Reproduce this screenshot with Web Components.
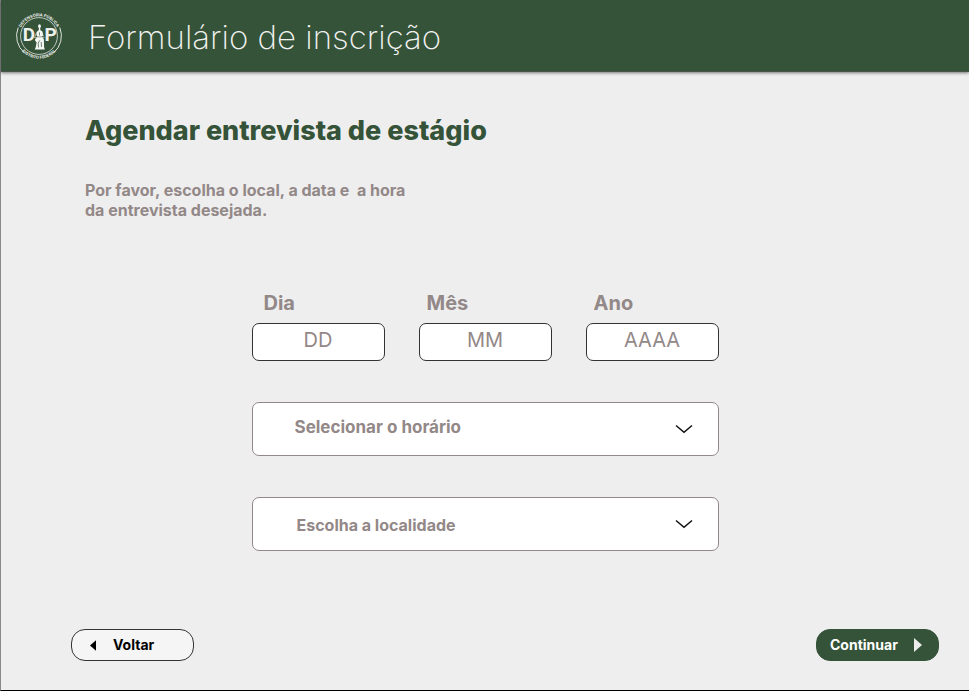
<!DOCTYPE html>
<html lang="pt-BR">
<head>
<meta charset="utf-8">
<meta name="viewport" content="width=device-width, initial-scale=1">
<title>Formulário de inscrição</title>
<style>
  :root {
    --green: #355338;
    --page: #eeeeee;
    --muted: #938888;
    --ink: #333333;
  }
  body { margin: 0; background: var(--page); font-family: Inter, "Liberation Sans", sans-serif; }
</style>
</head>
<body>
<interview-page>
  <app-header slot="header">Formulário de inscrição</app-header>
  <page-intro>
    <span slot="title">Agendar entrevista de estágio</span>
    <span>Por favor, escolha o local, a data e &nbsp;a hora<br>da entrevista desejada.</span>
  </page-intro>
  <schedule-form></schedule-form>
  <nav-button slot="actions" kind="back">Voltar</nav-button>
  <nav-button slot="actions" kind="next">Continuar</nav-button>
</interview-page>

<script>
  const define = (name, html, setup) => {
    const template = document.createElement('template');
    template.innerHTML = html;
    customElements.define(name, class extends HTMLElement {
      constructor() {
        super();
        this.attachShadow({ mode: 'open' }).append(template.content.cloneNode(true));
      }
      connectedCallback() { if (setup) setup(this, this.shadowRoot); }
    });
  };

  define('interview-page', `
    <style>
      :host { display: flex; flex-direction: column; min-height: 100vh; box-sizing: border-box;
        border-left: 1px solid #8a8a8a; border-bottom: 1px solid #000; background: var(--page); }
      main { flex: 1; padding: 41px 84px 0; }
      footer { display: flex; justify-content: space-between; padding: 0 30px 29px 70px; }
    </style>
    <slot name="header"></slot>
    <main><slot></slot></main>
    <footer><slot name="actions"></slot></footer>`);

  define('seal-logo', `
    <style>
      :host { display: block; flex: none; width: 48px; height: 48px; }
      svg { display: block; width: 100%; height: 100%; overflow: visible; }
    </style>
    <svg viewBox="0 0 48 48" fill="none" role="img" aria-label="Defensoria Pública">
      <defs>
        <path id="top" d="M4.6 28A19.8 19.8 0 1 1 43.4 28"/>
        <path id="bottom" d="M7 39A22.6 22.6 0 0 0 41 39"/>
      </defs>
      <path d="M3.2 15.5A22.4 22.4 0 0 0 9.5 41M44.8 15.5A22.4 22.4 0 0 1 38.5 41" stroke="#dfe5df" stroke-width="1"/>
      <circle cx="24" cy="24" r="18.4" stroke="#dfe5df" stroke-width=".8"/>
      <g fill="#eef1ee" font-family="Inter, sans-serif" font-weight="700" text-anchor="middle">
        <text font-size="4"><textPath href="#top" startOffset="50%">DEFENSORIA PÚBLICA</textPath></text>
        <text font-size="4"><textPath href="#bottom" startOffset="50%">DISTRITO FEDERAL</textPath></text>
        <g font-family="'Liberation Sans Narrow', Roboto, sans-serif" font-size="19">
          <text x="14" y="29">D</text>
          <text x="35.5" y="29">P</text>
        </g>
      </g>
      <g fill="#f4f6f4">
        <ellipse cx="24.5" cy="14.2" rx="1.4" ry="1.9"/>
        <path d="M24 15.5h1.1l.3 2.7 1.8 1.1.9 4-1 1.2 1.8 3 .2 7.5.7 2.6H19.8l1-2.6.8-4.6-1.9-2.5 2.6-3.4-.9-1.4.8-3.8 1.5-1z"/>
      </g>
      <path d="M21 25h6.6M24.5 20.4v3M24.8 28.4l-1.6 2.6.3 4.5M26.2 30l.3 5" stroke="#355338" stroke-width=".7"/>
      <path d="M21.8 19.8l-1.8 5M27 19.8l1.4 4.6M19 25.6h10.5" stroke="#eef1ee" stroke-width=".6"/>
    </svg>`);

  define('app-header', `
    <style>
      :host { display: block; }
      header { display: flex; align-items: center; gap: 25px; box-sizing: border-box; min-height: 72px; padding: 0 14px;
        background: var(--green); border-bottom: 1px solid #4c534d; box-shadow: 0 1px 3px rgba(0,0,0,.5); }
      h1 { margin: 0; padding-top: 3px; font-size: 33px; line-height: 40px; font-weight: 200; color: #f1f1f1; }
    </style>
    <header><seal-logo></seal-logo><h1><slot></slot></h1></header>`);

  define('page-intro', `
    <style>
      :host { display: block; }
      h2 { margin: 0 0 31px; font-size: 27px; line-height: 36px; font-weight: 800; color: var(--green); }
      p { margin: 0; font-size: 16px; line-height: 20px; font-weight: 700; color: var(--muted); }
    </style>
    <h2><slot name="title"></slot></h2>
    <p><slot></slot></p>`);

  define('date-field', `
    <style>
      :host { display: block; flex: 1; min-width: 0; }
      label { display: block; margin-bottom: 8px; padding-left: 12px; font-size: 20px; line-height: 24px; font-weight: 700; color: var(--muted); }
      :host([inset="small"]) label { padding-left: 8px; }
      input { display: block; box-sizing: border-box; width: 100%; height: 38px; margin: 0; padding: 0 8px 4px;
        border: 1px solid var(--ink); border-radius: 7px; background: #fff; font: 400 20px/24px Inter, sans-serif;
        color: var(--muted); text-align: center; }
      input::placeholder { color: var(--muted); opacity: 1; }
    </style>
    <label for="field"></label>
    <input id="field" type="text" inputmode="numeric">`,
    (host, root) => {
      root.querySelector('label').textContent = host.getAttribute('label');
      root.querySelector('input').placeholder = host.getAttribute('hint');
    });

  define('choice-field', `
    <style>
      :host { display: grid; align-items: center; }
      select, svg { grid-area: 1 / 1; }
      select { appearance: none; box-sizing: border-box; width: 100%; height: 54px; margin: 0; padding: 0 60px 4px 42px;
        border: 1px solid var(--muted); border-radius: 7px; background: #fff; font: 700 17px/24px Inter, sans-serif; color: var(--muted); }
      :host([size="small"]) select { padding: 2px 60px 0 44px; font-size: 16px; }
      svg { justify-self: end; width: 18px; height: 10px; margin-right: 26px; pointer-events: none; }
    </style>
    <select><option></option></select>
    <svg viewBox="0 0 18 10" fill="none" aria-hidden="true"><path d="M1 1.5 9 8.2 17 1.5" stroke="#111" stroke-width="1.5"/></svg>`,
    (host, root) => {
      const label = host.getAttribute('label');
      root.querySelector('select').setAttribute('aria-label', label);
      root.querySelector('option').textContent = label;
    });

  define('schedule-form', `
    <style>
      :host { display: block; margin-top: 71px; }
      form { display: flex; flex-direction: column; gap: 41px; max-width: 467px; margin: 0 auto; }
      .date { display: flex; gap: 34px; }
    </style>
    <form>
      <div class="date">
        <date-field label="Dia" hint="DD"></date-field>
        <date-field label="Mês" hint="MM" inset="small"></date-field>
        <date-field label="Ano" hint="AAAA" inset="small"></date-field>
      </div>
      <choice-field label="Selecionar o horário"></choice-field>
      <choice-field label="Escolha a localidade" size="small"></choice-field>
    </form>`);

  define('nav-button', `
    <style>
      :host { display: block; }
      button { display: flex; align-items: center; box-sizing: border-box; min-width: 123px; height: 32px; margin: 0;
        border: 1px solid var(--ink); border-radius: 14px; background: #f5f5f5; color: #000;
        font: 700 14px/20px Inter, sans-serif; padding: 0 18px; gap: 17px; }
      svg { flex: none; width: 6px; height: 11px; fill: currentColor; }
      .next { display: none; }
      :host([kind="next"]) button { background: var(--green); border-color: var(--green); color: #fff; padding: 0 16px 0 13px; gap: 16px; }
      :host([kind="next"]) .back { display: none; }
      :host([kind="next"]) .next { display: block; width: 8px; height: 14px; fill: #ededed; }
    </style>
    <button type="button">
      <svg class="back" viewBox="0 0 7 12" aria-hidden="true"><path d="M7 0v12L0 6z"/></svg>
      <slot></slot>
      <svg class="next" viewBox="0 0 8 14" aria-hidden="true"><path d="M0 0l8 7-8 7z"/></svg>
    </button>`);
</script>
</body>
</html>
